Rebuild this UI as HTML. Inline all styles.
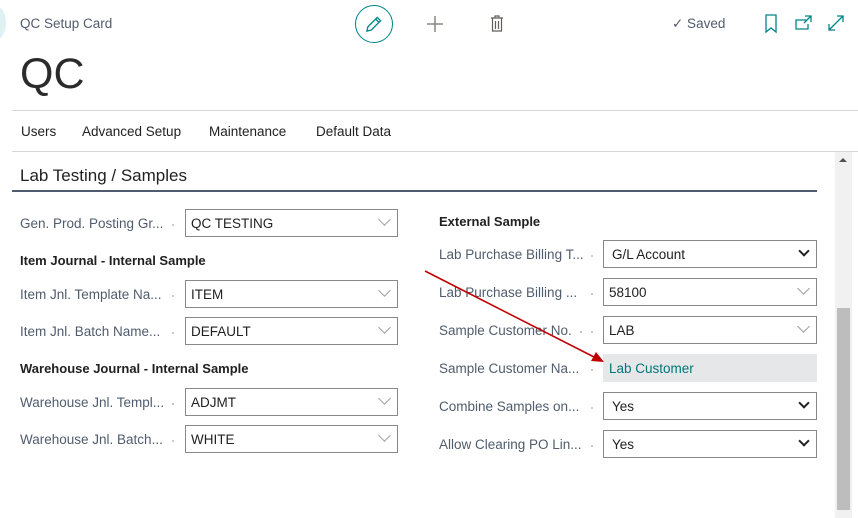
<!DOCTYPE html>
<html><head><meta charset="utf-8"><style>
*{margin:0;padding:0;box-sizing:border-box}
body{width:858px;height:518px;background:#fff;font-family:"Liberation Sans",sans-serif;position:relative;overflow:hidden;color:#212121}
.a{position:absolute;white-space:nowrap}
.lbl{position:absolute;font-size:13.5px;color:#505c6d;white-space:nowrap}
.dot{position:absolute;width:2px;height:2px;background:#c8c8c8}
.box{position:absolute;height:28px;border:1px solid #8a8886;background:#fff;font-size:13.5px;color:#212121;padding:6px 0 0 5px}
.sel{position:absolute;right:8px;width:8px;height:8px;border-right:2px solid #222;border-bottom:2px solid #222;transform:rotate(45deg);top:6px}
.lk{position:absolute;right:8px;top:5px;width:9px;height:9px;border-right:1px solid #a19f9d;border-bottom:1px solid #a19f9d;transform:rotate(45deg)}
.h{position:absolute;font-size:13px;font-weight:bold;color:#212121}
</style></head><body>
<div class="a" style="left:-14px;top:6px;width:20px;height:34px;border-radius:50%;background:#dff1f3"></div>
<div class="a" style="left:20px;top:16px;font-size:13.5px;color:#505c6d">QC Setup Card</div>
<div class="a" style="left:355px;top:5px;width:38px;height:38px;border:1px solid #008489;border-radius:50%"></div>
<svg class="a" style="left:363px;top:13px" width="22" height="22" viewBox="0 0 20 20"><path d="M3.5 16.5 L4.5 12.5 L13 4 L16 7 L7.5 15.5 Z M11.5 5.5 L14.5 8.5" fill="none" stroke="#008489" stroke-width="1.2"/></svg>
<svg class="a" style="left:426px;top:15px" width="18" height="18"><path d="M9 1V17M1 9H17" stroke="#8a8886" stroke-width="1.5"/></svg>
<svg class="a" style="left:489px;top:14px" width="16" height="20" viewBox="0 0 16 20"><path d="M2 4H14M6 4V2H10V4M3.5 4V17H12.5V4M6.5 7V15M9.5 7V15" fill="none" stroke="#605e5c" stroke-width="1.2"/></svg>
<div class="a" style="left:672px;top:16px;font-size:13.5px;color:#505c6d">✓ Saved</div>
<svg class="a" style="left:764px;top:14px" width="14" height="20"><path d="M2 1H12V18L7 14L2 18Z" fill="none" stroke="#008489" stroke-width="1.3"/></svg>
<svg class="a" style="left:795px;top:15px" width="18" height="16"><path d="M11 5H1V14H13V9M10 1H16V7M16 1L9 8" fill="none" stroke="#008489" stroke-width="1.3"/></svg>
<svg class="a" style="left:827px;top:14px" width="18" height="18"><path d="M2 16L16 2M10 2H16V8M2 10V16H8" fill="none" stroke="#008489" stroke-width="1.3"/></svg>
<div class="a" style="left:20px;top:50px;font-size:43px;color:#2b2b2b;letter-spacing:0px">QC</div>
<div class="a" style="left:12px;top:110px;width:846px;height:1px;background:#d6d6d6"></div>
<div class="a" style="left:21px;top:124px;font-size:13.5px;color:#212121">Users</div>
<div class="a" style="left:82px;top:124px;font-size:13.5px;color:#212121">Advanced Setup</div>
<div class="a" style="left:209px;top:124px;font-size:13.5px;color:#212121">Maintenance</div>
<div class="a" style="left:316px;top:124px;font-size:13.5px;color:#212121">Default Data</div>
<div class="a" style="left:12px;top:151px;width:846px;height:1px;background:#d6d6d6"></div>
<div class="a" style="left:835px;top:152px;width:17px;height:366px;background:#f1f1f1"></div>
<div class="a" style="left:839px;top:158px;width:0;height:0;border-left:4px solid transparent;border-right:4px solid transparent;border-bottom:4px solid #505050"></div>
<div class="a" style="left:837px;top:308px;width:13px;height:202px;background:#bdbdbd"></div>
<div class="a" style="left:20px;top:166px;font-size:17px;color:#212121">Lab Testing / Samples</div>
<div class="a" style="left:12px;top:190px;width:805px;height:2px;background:#505c6d"></div>

<div class="lbl" style="left:20px;top:216px">Gen. Prod. Posting Gr...</div><div class="dot" style="left:172px;top:224px"></div>
<div class="box" style="left:185px;top:209px;width:213px">QC TESTING<span class="lk"></span></div>
<div class="h" style="left:20px;top:253px">Item Journal - Internal Sample</div>
<div class="lbl" style="left:20px;top:287px">Item Jnl. Template Na...</div><div class="dot" style="left:172px;top:295px"></div>
<div class="box" style="left:185px;top:280px;width:213px">ITEM<span class="lk"></span></div>
<div class="lbl" style="left:20px;top:324px">Item Jnl. Batch Name...</div><div class="dot" style="left:172px;top:332px"></div>
<div class="box" style="left:185px;top:317px;width:213px">DEFAULT<span class="lk"></span></div>
<div class="h" style="left:20px;top:361px">Warehouse Journal - Internal Sample</div>
<div class="lbl" style="left:20px;top:395px">Warehouse Jnl. Templ...</div><div class="dot" style="left:172px;top:403px"></div>
<div class="box" style="left:185px;top:388px;width:213px">ADJMT<span class="lk"></span></div>
<div class="lbl" style="left:20px;top:432px">Warehouse Jnl. Batch...</div><div class="dot" style="left:172px;top:440px"></div>
<div class="box" style="left:185px;top:425px;width:213px">WHITE<span class="lk"></span></div>

<div class="h" style="left:439px;top:214px">External Sample</div>
<div class="lbl" style="left:439px;top:247px">Lab Purchase Billing T...</div><div class="dot" style="left:591px;top:255px"></div>
<div class="box" style="left:603px;top:240px;width:214px;padding-left:8px">G/L Account<span class="sel"></span></div>
<div class="lbl" style="left:439px;top:285px">Lab Purchase Billing ...</div><div class="dot" style="left:591px;top:293px"></div>
<div class="box" style="left:603px;top:278px;width:214px">58100<span class="lk"></span></div>
<div class="lbl" style="left:439px;top:323px">Sample Customer No.</div><div class="dot" style="left:580px;top:331px"></div><div class="dot" style="left:591px;top:331px"></div>
<div class="box" style="left:603px;top:316px;width:214px">LAB<span class="lk"></span></div>
<div class="lbl" style="left:439px;top:361px">Sample Customer Na...</div><div class="dot" style="left:591px;top:369px"></div>
<div class="box" style="left:603px;top:354px;width:214px;border:none;background:#e6e7e8;color:#00757a;padding-top:7px;padding-left:6px">Lab Customer</div>
<div class="lbl" style="left:439px;top:399px">Combine Samples on...</div><div class="dot" style="left:591px;top:407px"></div>
<div class="box" style="left:603px;top:392px;width:214px;padding-left:8px">Yes<span class="sel"></span></div>
<div class="lbl" style="left:439px;top:437px">Allow Clearing PO Lin...</div><div class="dot" style="left:591px;top:445px"></div>
<div class="box" style="left:603px;top:430px;width:214px;padding-left:8px">Yes<span class="sel"></span></div>

<svg class="a" style="left:0;top:0" width="858" height="518"><line x1="425" y1="271" x2="596" y2="358" stroke="#c00000" stroke-width="1.6"/><path d="M604 362 L591 361 L596 352 Z" fill="#c00000"/></svg>
</body></html>
